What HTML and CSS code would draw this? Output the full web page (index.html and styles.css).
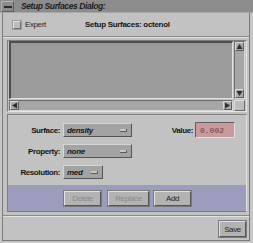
FILE: index.html
```html
<!DOCTYPE html>
<html>
<head>
<meta charset="utf-8">
<link rel="stylesheet" href="styles.css">
</head>
<body>
<div class="titlebar">
  <span class="menubtn"><span class="dash"></span></span>
  <span class="title">Setup Surfaces Dialog:</span>
</div>
<div class="client">
  <div class="top-row">
    <label class="chk"><span class="box"></span><span class="chk-text">Expert</span></label>
    <span class="heading">Setup Surfaces: octenol</span>
  </div>
  <div class="sep"></div>
  <div class="listframe">
    <div class="list"></div>
    <div class="vscroll">
      <span class="arrow"><svg width="7" height="7" viewBox="0 0 7 7"><path d="M3.5 1 L6.5 6 L0.5 6 Z" fill="#2e2e2e"/></svg></span>
      <span class="trough"></span>
      <span class="arrow"><svg width="7" height="7" viewBox="0 0 7 7"><path d="M0.5 1 L6.5 1 L3.5 6 Z" fill="#2e2e2e"/></svg></span>
    </div>
    <div class="hscroll">
      <span class="arrow"><svg width="7" height="7" viewBox="0 0 7 7"><path d="M1 3.5 L6 0.5 L6 6.5 Z" fill="#2e2e2e"/></svg></span>
      <span class="trough"></span>
      <span class="arrow"><svg width="7" height="7" viewBox="0 0 7 7"><path d="M1 0.5 L6 3.5 L1 6.5 Z" fill="#2e2e2e"/></svg></span>
    </div>
    <div class="corner"></div>
  </div>
  <div class="formframe">
    <div class="form">
      <div class="row row-first">
        <span class="label">Surface:</span>
        <span class="option wide"><span class="opt-text">density</span><span class="ind"></span></span>
        <span class="label value-label">Value:</span>
        <span class="input">0.002</span>
      </div>
      <div class="row">
        <span class="label">Property:</span>
        <span class="option wide"><span class="opt-text">none</span><span class="ind"></span></span>
      </div>
      <div class="row">
        <span class="label">Resolution:</span>
        <span class="option narrow"><span class="opt-text">med</span><span class="ind"></span></span>
      </div>
    </div>
    <div class="actions">
      <span class="btn disabled b-delete">Delete</span>
      <span class="btn disabled b-replace">Replace</span>
      <span class="btn b-add">Add</span>
    </div>
  </div>
  <div class="sep sep-bottom"></div>
  <div class="footer">
    <span class="btn b-save">Save</span>
  </div>
</div>
</body>
</html>
```
FILE: styles.css
```css
html, body {
  margin: 0;
  padding: 0;
}
body {
  width: 253px;
  height: 243px;
  overflow: hidden;
  background: #c6c6c6;
  font-family: "Liberation Sans", Arial, sans-serif;
  font-size: 8px;
  color: #1a1a1a;
}
.titlebar {
  height: 12px;
  background: #8c8c8c;
  border-bottom: 1px solid #a8a8a8;
  display: flex;
  align-items: center;
}
.menubtn {
  box-sizing: border-box;
  width: 13px;
  height: 11px;
  margin-left: 1px;
  border-top: 1px solid #b4b4b4;
  border-left: 1px solid #b4b4b4;
  border-bottom: 1px solid #5c5c5c;
  border-right: 1px solid #5c5c5c;
  display: flex;
  align-items: center;
  justify-content: center;
}
.menubtn .dash {
  width: 8px;
  height: 2px;
  background: #2a2a2a;
  margin-top: 2px;
}
.title {
  margin-left: 7px;
  font-style: italic;
  font-weight: bold;
  font-size: 8.5px;
  letter-spacing: -0.4px;
  color: #1c1c1c;
}
.client {
  box-sizing: border-box;
  margin: 0 3px 0 2px;
  height: 228px;
  background: #c2c2c2;
  border-left: 1px solid #7c7c7c;
  border-right: 1px solid #7c7c7c;
  border-bottom: 1px solid #7c7c7c;
  display: flex;
  flex-direction: column;
}
.top-row {
  height: 23px;
  display: flex;
  align-items: center;
  padding-left: 10px;
}
.chk {
  width: 72px;
  display: flex;
  align-items: center;
}
.box {
  box-sizing: border-box;
  width: 8px;
  height: 8px;
  background: #bcbcbc;
  border-top: 1px solid #e6e6e6;
  border-left: 1px solid #e6e6e6;
  border-bottom: 1px solid #6e6e6e;
  border-right: 1px solid #6e6e6e;
  outline: 1px solid #9a9a9a;
}
.chk-text {
  margin-left: 4px;
  letter-spacing: -0.4px;
  color: #2a2a2a;
}
.heading {
  font-weight: bold;
  letter-spacing: -0.3px;
  color: #141414;
}
.sep {
  height: 1px;
  background: #8a8a8a;
  border-bottom: 1px solid #e2e2e2;
}
.listframe {
  margin: 2px 2px 0 4px;
  border-top: 1px solid #7e7e7e;
  border-left: 1px solid #7e7e7e;
  border-bottom: 1px solid #e4e4e4;
  border-right: 1px solid #e4e4e4;
  padding: 0 1px 0 1px;
  display: grid;
  grid-template-columns: 224px 11px;
  grid-template-rows: 58px 11px;
  column-gap: 1px;
  row-gap: 1px;
}
.list {
  box-sizing: border-box;
  background: #9b9b9b;
  border-top: 2px solid #4e4e4e;
  border-left: 2px solid #4e4e4e;
  border-bottom: 1px solid #e0e0e0;
  border-right: 1px solid #e0e0e0;
}
.vscroll, .hscroll {
  box-sizing: border-box;
  background: #a6a6a6;
  border-top: 1px solid #6c6c6c;
  border-left: 1px solid #6c6c6c;
  border-bottom: 1px solid #d8d8d8;
  border-right: 1px solid #d8d8d8;
  display: flex;
}
.vscroll { flex-direction: column; }
.trough { flex: 1; }
.arrow {
  box-sizing: border-box;
  width: 9px;
  height: 9px;
  background: #a9a9a9;
  border-top: 1px solid #dcdcdc;
  border-left: 1px solid #dcdcdc;
  border-bottom: 1px solid #5e5e5e;
  border-right: 1px solid #5e5e5e;
  display: flex;
  align-items: center;
  justify-content: center;
}
.arrow svg { display: block; }
.corner {
  box-sizing: border-box;
  background: #bdbdbd;
  border-top: 1px solid #dedede;
  border-left: 1px solid #dedede;
  border-bottom: 1px solid #6a6a6a;
  border-right: 1px solid #6a6a6a;
}
.formframe {
  margin: 2px 2px 0 4px;
  border-top: 1px solid #7e7e7e;
  border-left: 1px solid #7e7e7e;
  border-bottom: 1px solid #7e7e7e;
  border-right: 1px solid #e4e4e4;
  display: flex;
  flex-direction: column;
}
.form {
  padding: 7px 0 6px 0;
  display: flex;
  flex-direction: column;
  gap: 7px;
}
.row {
  height: 14px;
  display: flex;
  align-items: center;
}
.row-first {
  height: 16px;
  margin-bottom: -1px;
}
.label {
  width: 52px;
  margin-right: 3px;
  text-align: right;
  font-weight: bold;
  letter-spacing: -0.4px;
  color: #141414;
}
.value-label {
  width: 29px;
  margin-left: 32px;
  margin-right: 2px;
}
.option {
  box-sizing: border-box;
  height: 14px;
  background: #a3a3a3;
  border-top: 1px solid #d6d6d6;
  border-left: 1px solid #d6d6d6;
  border-bottom: 1px solid #555555;
  border-right: 1px solid #555555;
  display: flex;
  align-items: center;
  justify-content: space-between;
  padding: 0 4px 0 3px;
}
.option.wide { width: 69px; }
.option.narrow { width: 40px; }
.opt-text {
  font-style: italic;
  font-weight: bold;
  letter-spacing: -0.3px;
  color: #161616;
}
.ind {
  box-sizing: border-box;
  width: 7px;
  height: 3px;
  background: #c8c8c8;
  border-bottom: 1px solid #5a5a5a;
  border-right: 1px solid #5a5a5a;
}
.input {
  box-sizing: border-box;
  width: 40px;
  height: 16px;
  background: #c99a9c;
  border-top: 1px solid #5e5e5e;
  border-left: 1px solid #5e5e5e;
  border-bottom: 1px solid #e0e0e0;
  border-right: 1px solid #e0e0e0;
  font-family: "Liberation Mono", "DejaVu Sans Mono", monospace;
  font-size: 8px;
  color: #6e3c3e;
  padding-left: 4px;
  display: flex;
  align-items: center;
}
.actions {
  height: 26px;
  background: #9c9cbc;
  display: flex;
  align-items: center;
  padding-left: 56px;
}
.btn {
  box-sizing: border-box;
  height: 15px;
  background: #b3b3b3;
  border-top: 1px solid #e2e2e2;
  border-left: 1px solid #e2e2e2;
  border-bottom: 1px solid #555555;
  border-right: 1px solid #555555;
  outline: 1px solid #7a7a7a;
  display: flex;
  align-items: center;
  justify-content: center;
  letter-spacing: -0.4px;
  color: #1e1e1e;
}
.btn.disabled { color: #8a8a8a; }
.b-delete { width: 37px; }
.b-replace { width: 41px; margin-left: 7px; }
.b-add { width: 37px; margin-left: 5px; }
.sep-bottom { margin-top: 3px; }
.footer {
  display: flex;
  justify-content: flex-end;
  padding: 4px 3px 0 0;
}
.b-save {
  width: 27px;
  height: 16px;
}
```
